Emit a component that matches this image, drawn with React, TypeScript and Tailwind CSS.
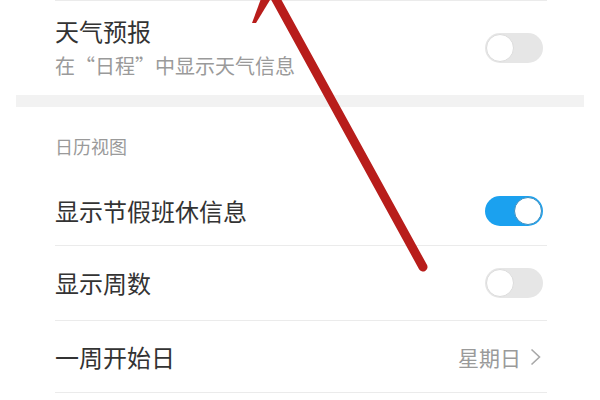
import React from 'react'

function Toggle({ on }: { on: boolean }) {
  return (
    <div
      className={`flex h-[30px] w-[58px] items-center rounded-full p-[1px] ${
        on ? 'justify-end bg-[#1ba1ef]' : 'justify-start bg-[#e6e6e6]'
      }`}
    >
      <div
        className={`h-[28px] w-[28px] rounded-full bg-white border ${
          on ? 'border-[#3d8fc0]' : 'border-[#dcdcdc]'
        }`}
      />
    </div>
  )
}

function Row({ label, h, children }: { label: string; h: string; children: React.ReactNode }) {
  return (
    <div className={`flex items-center justify-between border-b border-[#ebebeb] pr-[4px] ${h}`}>
      <span className="text-[24px] leading-[32px] text-[#333]">{label}</span>
      {children}
    </div>
  )
}

export default function App() {
  return (
    <div
      className="relative h-[400px] w-[600px] overflow-hidden bg-white"
      style={{ fontFamily: '"Noto Sans CJK SC", "Noto Sans", sans-serif' }}
    >
      <div className="px-[16px]">
        <div className="ml-[39px] mr-[37px] border-t border-[#ebebeb]">
          <div className="flex h-[94px] items-center justify-between pr-[4px]">
            <div className="flex flex-col pb-[2px]">
              <span className="text-[24px] leading-[32px] text-[#333]">天气预报</span>
              <span className="mt-[5px] text-[20px] leading-[28px] text-[#9a9a9a]">
                在“日程”中显示天气信息
              </span>
            </div>
            <Toggle on={false} />
          </div>
        </div>

        <div className="h-[12px] bg-[#f2f2f2]" />

        <div className="ml-[39px] mr-[37px]">
          <div className="flex h-[69px] items-end pb-[17px]">
            <span className="text-[18px] leading-[26px] text-[#9a9a9a]">日历视图</span>
          </div>
          <Row label="显示节假班休信息" h="h-[70px]">
            <Toggle on />
          </Row>
          <Row label="显示周数" h="h-[75px]">
            <Toggle on={false} />
          </Row>
          <Row label="一周开始日" h="h-[72px]">
            <div className="flex items-center gap-[9px] pr-[2px]">
              <span className="text-[21px] leading-[28px] text-[#9a9a9a]">星期日</span>
              <svg width="11" height="18" viewBox="0 0 11 18" fill="none">
                <path d="M1.5 1.5 L9.5 9 L1.5 16.5" stroke="#a8a8a8" strokeWidth="1.6" />
              </svg>
            </div>
          </Row>
        </div>
      </div>

      {/* red annotation arrow over the screenshot */}
      <svg className="pointer-events-none absolute left-0 top-0" width="600" height="400" viewBox="0 0 600 400">
        <polygon points="252,23 256,23 270,0 262,-4" fill="#b81d1b" />
        <line x1="272" y1="-8" x2="423" y2="267" stroke="#b81d1b" strokeWidth="9" strokeLinecap="round" />
      </svg>
    </div>
  )
}
